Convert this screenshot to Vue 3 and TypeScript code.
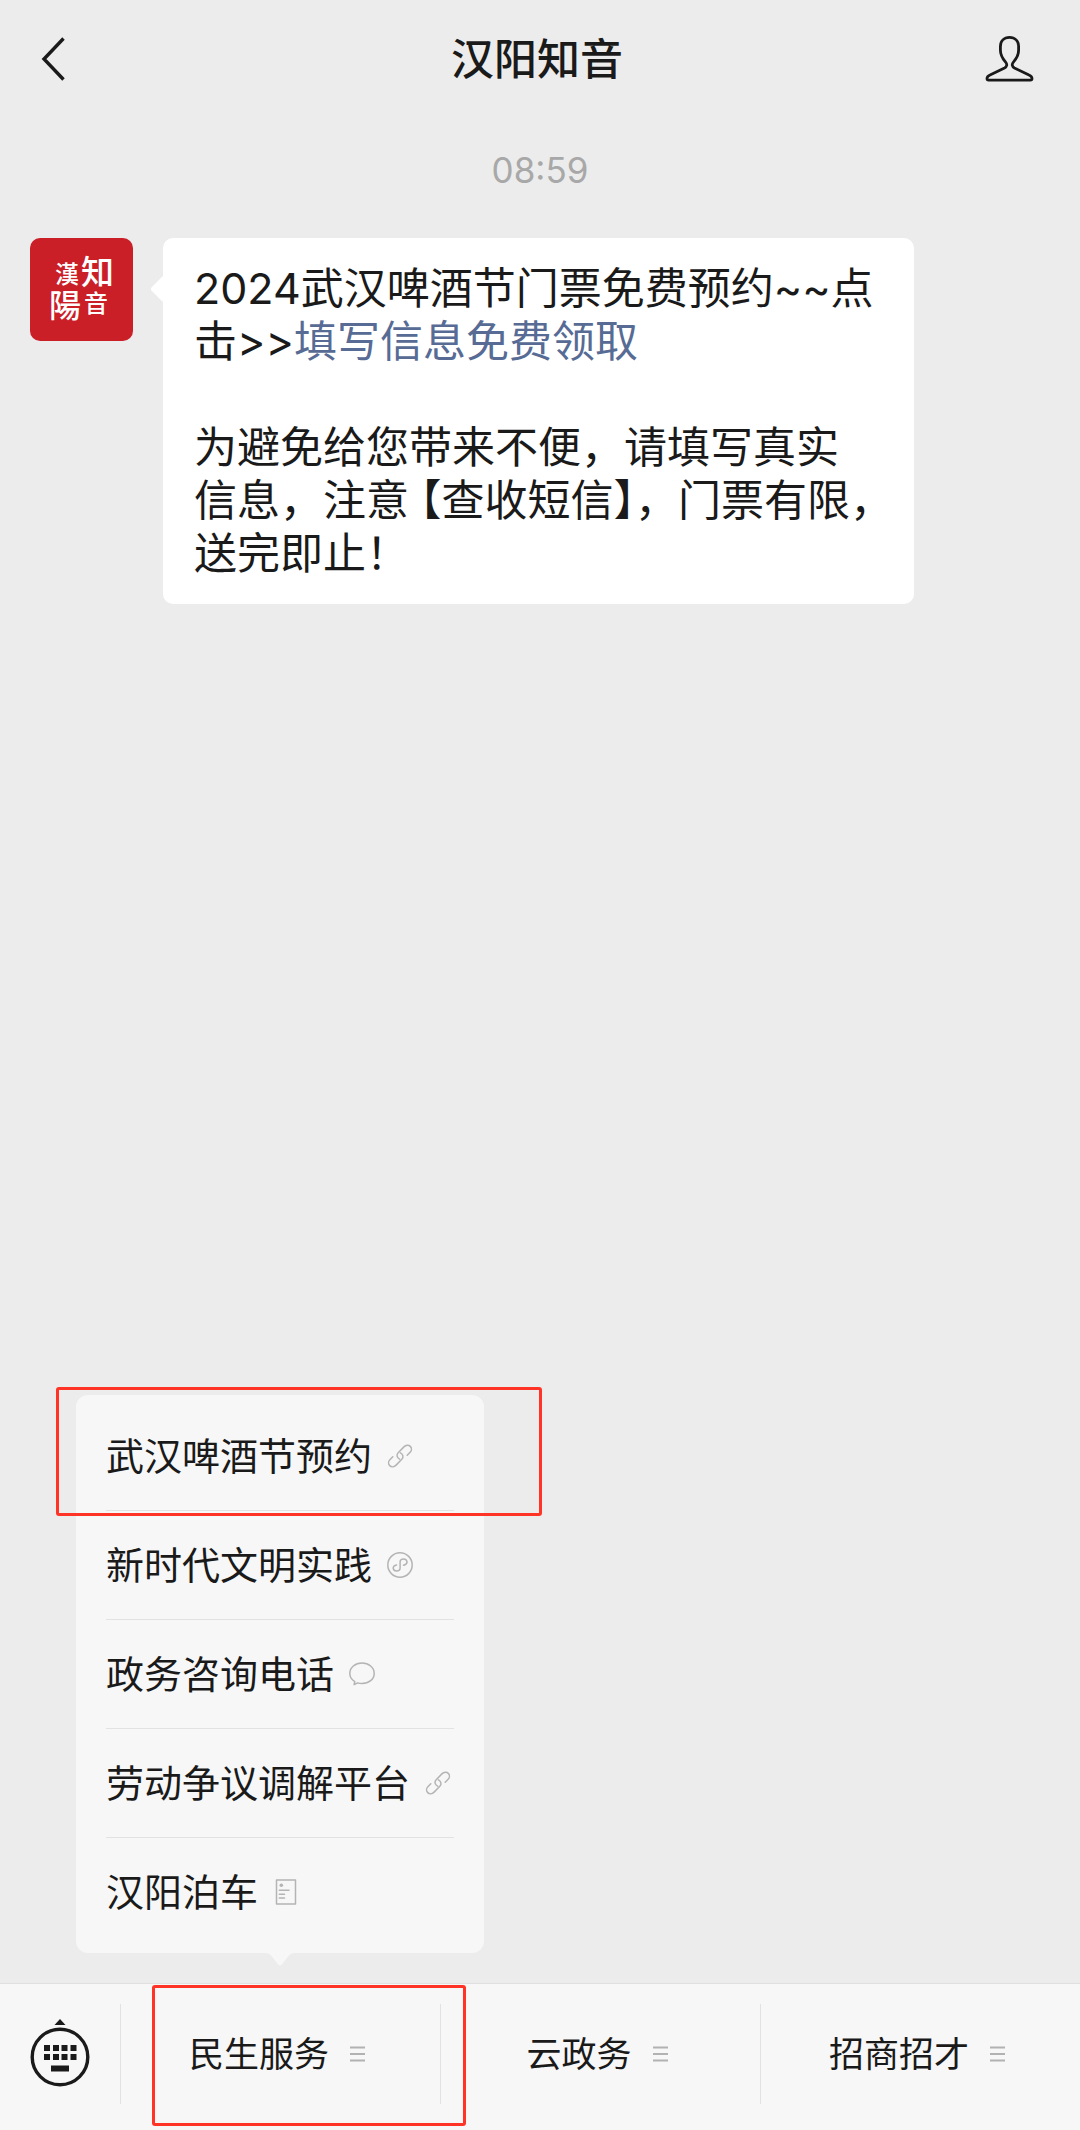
<script setup lang="ts">
import { ref } from 'vue'

type IconName = 'link' | 'mini' | 'chat' | 'doc'

interface MenuItem {
  label: string
  icon: IconName
  marked?: boolean
}

interface Tab {
  label: string
  marked?: boolean
}

const menuItems = ref<MenuItem[]>([
  { label: '武汉啤酒节预约', icon: 'link', marked: true },
  { label: '新时代文明实践', icon: 'mini' },
  { label: '政务咨询电话', icon: 'chat' },
  { label: '劳动争议调解平台', icon: 'link' },
  { label: '汉阳泊车', icon: 'doc' },
])

const tabs = ref<Tab[]>([
  { label: '民生服务', marked: true },
  { label: '云政务' },
  { label: '招商招才' },
])
</script>

<template>
  <div class="page">
    <header class="header">
      <button class="icon-button" type="button" aria-label="返回">
        <svg width="26" height="46" viewBox="0 0 26 46" fill="none" stroke="#1a1a1a" stroke-width="3.4">
          <path d="M23.500 2.500L4 23L23.500 43.500" />
        </svg>
      </button>
      <h1 class="title">汉阳知音</h1>
      <button class="icon-button" type="button" aria-label="公众号资料">
        <svg width="49" height="48" viewBox="0 0 49 48" fill="none" stroke="#1a1a1a" stroke-width="2.8" stroke-linejoin="round">
          <path d="M24.500 2.400C19 2.400 15.400 6 15.400 11.500V15C15.400 20 17.500 23.500 20.400 26.800C22.600 29.300 22 31.700 19.500 33L5 40C2.800 41 2 42 2 43.600C2 44.700 2.500 45.200 3.600 45.200H45.400C46.500 45.200 47 44.700 47 43.600C47 42 46.200 41 44 40L29.500 33C27 31.700 26.400 29.300 28.600 26.800C31.500 23.500 33.600 20 33.600 15V11.500C33.600 6 30 2.400 24.500 2.400Z" />
        </svg>
      </button>
    </header>

    <main class="chat">
      <time class="time">08:59</time>
      <article class="message">
        <svg class="avatar" viewBox="0 0 103 103" role="img" aria-label="汉阳知音">
          <rect width="103" height="103" rx="10" fill="#cb1f28" />
          <g class="seal">
            <text x="25" y="45" font-size="24">漢</text>
            <text x="19" y="79" font-size="32">陽</text>
            <text x="51" y="46" font-size="33">知</text>
            <text x="54" y="74" font-size="24">音</text>
          </g>
        </svg>
        <div class="bubble">
          <p>2024武汉啤酒节门票免费预约~~点<br />击&gt;&gt;<a href="#">填写信息免费领取</a></p>
          <p>为避免给您带来不便，请填写真实<br />信息，注意<span class="bracket">【</span>查收短信】，门票有限，<br />送完即止！</p>
        </div>
      </article>
    </main>

    <nav class="menu" aria-label="民生服务">
      <ul>
        <li v-for="item in menuItems" :key="item.label">
          <a class="menu-link" href="#">
            <span>{{ item.label }}</span>
            <svg class="item-icon" viewBox="0 0 26 26" aria-hidden="true">
              <g v-if="item.icon === 'link'">
                <path d="M12.600 16.200C9.800 14.800 9.200 11.800 11.200 9.700L16.900 3.900C18.900 1.900 21.700 1.800 23.300 3.400C24.900 5 24.800 7.600 22.900 9.500L20.200 12.200" />
                <path d="M13.400 9.800C16.200 11.200 16.800 14.200 14.800 16.300L9.100 22.100C7.100 24.100 4.300 24.200 2.700 22.600C1.100 21 1.200 18.400 3.100 16.500L5.800 13.800" />
              </g>
              <g v-else-if="item.icon === 'mini'">
                <circle cx="13" cy="13" r="12.200" />
                <path d="M16.500 13.200C18.600 12.800 20 11.600 20 10C20 8.300 18.600 7.100 16.700 7.100C14.700 7.100 13.100 8.400 13.100 10V16C13.100 17.700 11.500 19 9.500 19C7.600 19 6.200 17.800 6.200 16.100C6.200 14.500 7.600 13.200 9.600 12.900" />
              </g>
              <g v-else-if="item.icon === 'chat'">
                <path d="M5.800 20.600C2.700 18.600 .800 15.800 .800 12.400C.800 6.600 6.200 2 13 2S25.200 6.600 25.200 12.400S19.800 22.500 13 22.500C11.500 22.500 10 22.300 8.700 21.900L5.100 23.700Z" />
              </g>
              <g v-else>
                <rect x="3.500" y="1" width="19" height="24" />
                <circle cx="8.300" cy="6.200" r="1.800" fill="#b4b4b4" stroke="none" />
                <path d="M6.300 11.300H16M6.300 15.200H11.500M6.300 19H11.500" />
              </g>
            </svg>
          </a>
          <span v-if="item.marked" class="mark mark-item" aria-hidden="true"></span>
        </li>
      </ul>
      <svg class="pointer" width="28" height="13" viewBox="0 0 28 13" aria-hidden="true">
        <path d="M0 0C3 .500 4.500 1.800 6 3.500L11.500 10.800Q14 14 16.500 10.800L22 3.500C23.500 1.800 25 .500 28 0Z" fill="#f7f7f7" />
      </svg>
    </nav>

    <footer class="bar">
      <button class="keyboard" type="button" aria-label="切换键盘">
        <svg width="60" height="70" viewBox="0 0 60 70">
          <path d="M30 0L35.500 6H24.500Z" fill="#1a1a1a" />
          <circle cx="30" cy="38" r="27.800" fill="none" stroke="#1a1a1a" stroke-width="3.400" />
          <g fill="#1a1a1a">
            <path d="M14 26h6v6h-6zM23 26h6v6h-6zM31.500 26h6v6h-6zM40.500 26h6v6h-6z" />
            <path d="M14 35h6v6h-6zM23 35h6v6h-6zM31.500 35h6v6h-6zM40.500 35h6v6h-6z" />
            <path d="M21 46.500h18v6h-18z" />
          </g>
        </svg>
      </button>
      <button v-for="tab in tabs" :key="tab.label" class="tab" type="button">
        <span>{{ tab.label }}</span>
        <svg width="22" height="16" viewBox="0 0 22 16" stroke="#b2b2b2" stroke-width="1.800" aria-hidden="true">
          <path d="M0 1.500H15M0 8H15M0 14.500H15" />
        </svg>
        <span v-if="tab.marked" class="mark mark-tab" aria-hidden="true"></span>
      </button>
    </footer>
  </div>
</template>

<style>
body {
  margin: 0;
  background: #ececec;
}
</style>

<style scoped>
.page {
  display: flex;
  flex-direction: column;
  min-height: 100vh;
  background: #ececec;
  color: #1a1a1a;
  font-family: Inter, "Noto Sans CJK SC", sans-serif;
}

button {
  margin: 0;
  padding: 0;
  border: 0;
  background: none;
  color: inherit;
  font: inherit;
}

a {
  color: inherit;
  text-decoration: none;
}

svg {
  display: block;
  flex: none;
}

.header {
  display: flex;
  align-items: center;
  justify-content: space-between;
  height: 118px;
  padding: 0 46px 0 40px;
}

.icon-button {
  display: flex;
  width: 49px;
}

.title {
  margin: 0;
  font-size: 43px;
  font-weight: 500;
  line-height: 60px;
}

.chat {
  flex: 1;
}

.time {
  display: block;
  padding: 28px 0 44px;
  color: #a8a8a8;
  font-size: 35px;
  line-height: 48px;
  text-align: center;
}

.message {
  display: flex;
  align-items: flex-start;
  gap: 30px;
  padding: 0 30px;
}

.avatar {
  width: 103px;
  height: 103px;
}

.seal {
  fill: #ffffff;
  font-family: "Noto Sans CJK TC", sans-serif;
  font-weight: 500;
}

.bubble {
  position: relative;
  box-sizing: border-box;
  flex: 0 1 751px;
  min-width: 0;
  padding: 24px 31px;
  border-radius: 10px;
  background: #ffffff;
  font-size: 43px;
  line-height: 53px;
  white-space: nowrap;
}

.bubble::before {
  content: "";
  position: absolute;
  top: 41px;
  left: -9px;
  width: 20px;
  height: 20px;
  border-radius: 3px;
  background: #ffffff;
  transform: rotate(45deg);
}

.bubble p {
  position: relative;
  margin: 0;
}

.bubble p + p {
  margin-top: 53px;
}

.bubble a {
  color: #576b95;
}

.bracket {
  margin-left: 11px;
  font-feature-settings: "halt";
}

.menu {
  position: relative;
  align-self: flex-start;
  min-width: 348px;
  margin: 0 0 30px 76px;
  padding: 7px 30px 6px;
  border-radius: 12px;
  background: #f7f7f7;
}

.menu ul {
  margin: 0;
  padding: 0;
  list-style: none;
}

.menu li {
  position: relative;
}

.menu-link {
  display: flex;
  align-items: center;
  gap: 15px;
  height: 108px;
  border-bottom: 1px solid #e2e2e2;
  font-size: 38px;
  line-height: 54px;
  white-space: nowrap;
}

.menu li:last-child .menu-link {
  border-bottom-color: transparent;
}

.item-icon {
  width: 26px;
  height: 26px;
  fill: none;
  stroke: #b4b4b4;
  stroke-width: 1.5;
  stroke-linecap: round;
  stroke-linejoin: round;
}

.pointer {
  position: absolute;
  top: 100%;
  left: 50%;
  margin-left: -14px;
}

.bar {
  display: flex;
  align-items: center;
  height: 140px;
  padding-bottom: 6px;
  border-top: 1px solid #e0e0e0;
  background: #f7f7f7;
}

.keyboard {
  display: flex;
  align-items: center;
  justify-content: center;
  width: 120px;
  height: 100px;
}

.tab {
  position: relative;
  display: flex;
  flex: 1;
  align-items: center;
  justify-content: center;
  gap: 21px;
  height: 100px;
  border-left: 1px solid #e2e2e2;
  font-size: 35px;
  line-height: 50px;
  white-space: nowrap;
}

.mark {
  position: absolute;
  z-index: 1;
  box-sizing: border-box;
  border: 3px solid #ff3326;
  border-radius: 3px;
  pointer-events: none;
}

.mark-item {
  top: -15px;
  right: -88px;
  bottom: -5px;
  left: -50px;
}

.mark-tab {
  top: -19px;
  right: -26px;
  bottom: -22px;
  left: 31px;
}
</style>
